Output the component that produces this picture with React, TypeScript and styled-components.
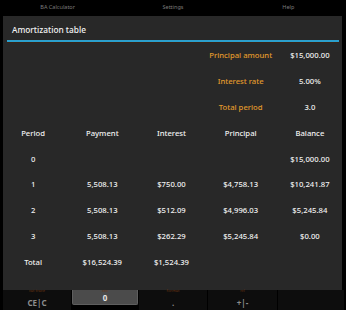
import React from "react";
import styled, { createGlobalStyle } from "styled-components";

const Global = createGlobalStyle`
  html, body { margin: 0; padding: 0; background: #000; }
  body { width: 346px; height: 310px; overflow: hidden; font-family: "Noto Sans", "Open Sans", sans-serif; }
`;

const Screen = styled.div`
  width: 346px;
  height: 310px;
  display: flex;
  flex-direction: column;
  background: #000;
`;

const MenuBar = styled.div`
  height: 16px;
  display: grid;
  grid-template-columns: repeat(3, 1fr);
  align-items: center;
  padding-bottom: 2px;
  box-sizing: border-box;
`;

const MenuItem = styled.div`
  text-align: center;
  font-size: 5.5px;
  color: #7c7c7c;
`;

const Dialog = styled.div`
  margin: 0 4px 0 3px;
  height: 274px;
  background: #282828;
  display: flex;
  flex-direction: column;
`;

const Title = styled.div`
  height: 24px;
  display: flex;
  align-items: center;
  padding-left: 9px;
  padding-top: 2px;
  box-sizing: border-box;
  font-size: 8.3px;
  font-weight: 500;
  color: #f4f4f4;
`;

const Divider = styled.div`
  margin: 0 3px 0 4px;
  height: 2px;
  background: #2b9fcc;
  border-bottom: 1px solid #3a2414;
`;

const Grid = styled.div`
  margin-left: -4.5px;
  display: grid;
  grid-template-columns: repeat(5, 69.2px);
  grid-auto-rows: 25.9px;
  margin-top: -1px;
`;

const Cell = styled.div<{ $accent?: boolean }>`
  display: flex;
  align-items: center;
  justify-content: center;
  font-size: 7.7px;
  font-weight: 500;
  white-space: nowrap;
  color: ${(p) => (p.$accent ? "#e29a2c" : "#f2f2f2")};
`;

const Keypad = styled.div`
  flex: 1;
  display: grid;
  grid-template-columns: 68px 66px 68px 69px 66px;
  column-gap: 1px;
  padding: 0 4px 0 3px;
`;

const Key = styled.div<{ $active?: boolean }>`
  position: relative;
  display: flex;
  align-items: center;
  justify-content: center;
  font-size: 8px;
  font-weight: 700;
  margin-bottom: ${(p) => (p.$active ? "5px" : "0")};
  border-radius: ${(p) => (p.$active ? "0 0 2px 2px" : "0")};
  background: ${(p) => (p.$active ? "#4b4b4b" : "#0d0d0d")};
  border: ${(p) => (p.$active ? "1px solid #5e5e5e" : "none")};
  border-top: none;
  color: ${(p) => (p.$active ? "#e6e6e6" : "#8c8c8c")};
  padding-top: ${(p) => (p.$active ? "1px" : "4px")};
`;

const KeyLabel = styled.span`
  position: absolute;
  top: -2px;
  left: 0;
  right: 0;
  text-align: center;
  font-size: 4px;
  color: #6a3412;
  font-weight: 400;
`;

const summary = [
  ["Principal amount", "$15,000.00"],
  ["Interest rate", "5.00%"],
  ["Total period", "3.0"],
];

const header = ["Period", "Payment", "Interest", "Principal", "Balance"];

const rows = [
  ["0", "", "", "", "$15,000.00"],
  ["1", "5,508.13", "$750.00", "$4,758.13", "$10,241.87"],
  ["2", "5,508.13", "$512.09", "$4,996.03", "$5,245.84"],
  ["3", "5,508.13", "$262.29", "$5,245.84", "$0.00"],
  ["Total", "$16,524.39", "$1,524.39", "", ""],
];

const keys = [
  { t: "CE|C", l: "cat trace" },
  { t: "0", l: "sto", active: true },
  { t: ".", l: "format" },
  { t: "+|-", l: "rcl" },
  { t: "", l: "" },
];

export default function App() {
  return (
    <Screen>
      <Global />
      <MenuBar>
        <MenuItem>BA Calculator</MenuItem>
        <MenuItem>Settings</MenuItem>
        <MenuItem>Help</MenuItem>
      </MenuBar>
      <Dialog>
        <Title>Amortization table</Title>
        <Divider />
        <Grid>
          {summary.map(([label, value]) => (
            <React.Fragment key={label}>
              <Cell />
              <Cell />
              <Cell />
              <Cell $accent>{label}</Cell>
              <Cell>{value}</Cell>
            </React.Fragment>
          ))}
          {header.map((h) => (
            <Cell key={h}>{h}</Cell>
          ))}
          {rows.map((r, i) =>
            r.map((c, j) => <Cell key={`${i}-${j}`}>{c}</Cell>)
          )}
        </Grid>
      </Dialog>
      <Keypad>
        {keys.map((k, i) => (
          <Key key={i} $active={k.active}>
            <KeyLabel>{k.l}</KeyLabel>
            {k.t}
          </Key>
        ))}
      </Keypad>
    </Screen>
  );
}
